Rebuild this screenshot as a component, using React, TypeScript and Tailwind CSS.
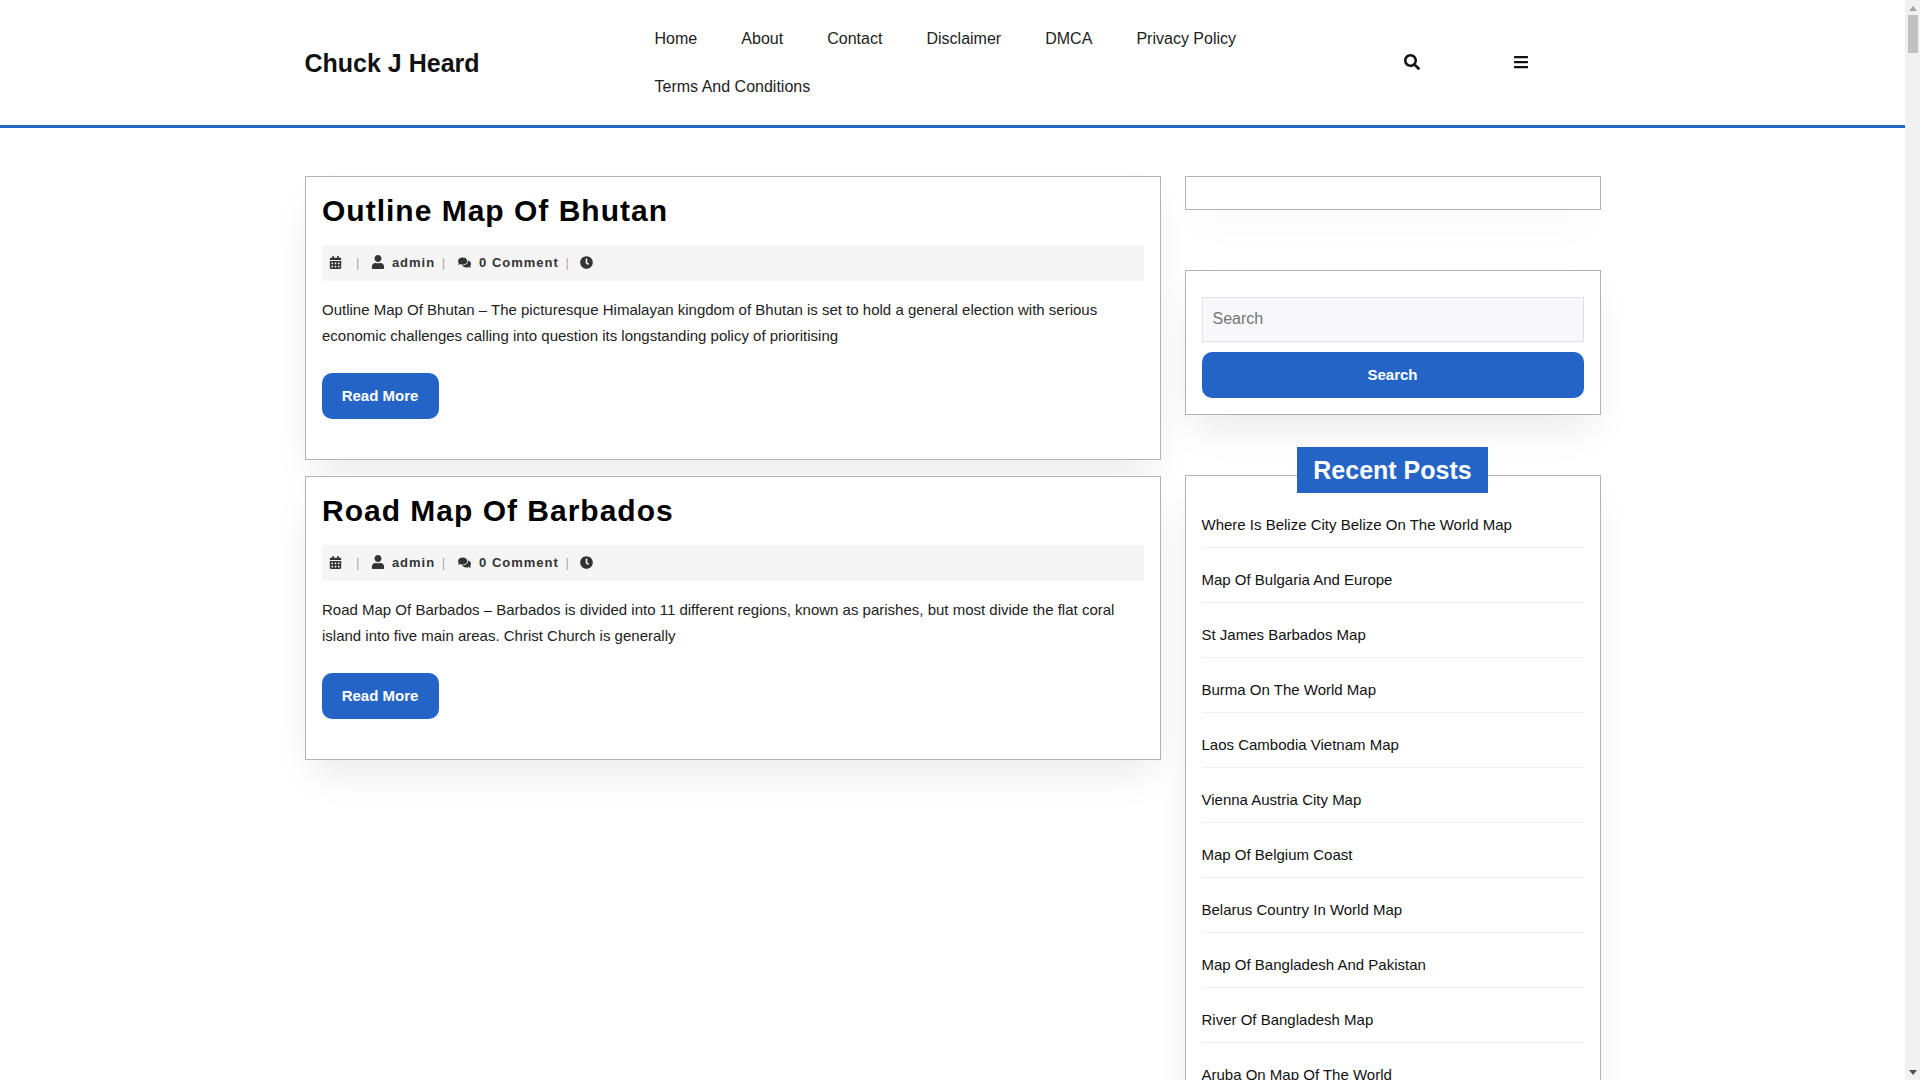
import { FaBars, FaCalendarAlt, FaClock, FaComments, FaSearch, FaUser } from "react-icons/fa";

const navItems = ["Home", "About", "Contact", "Disclaimer", "DMCA", "Privacy Policy", "Terms And Conditions"];

const posts = [
  {
    title: "Outline Map Of Bhutan",
    excerpt:
      "Outline Map Of Bhutan – The picturesque Himalayan kingdom of Bhutan is set to hold a general election with serious economic challenges calling into question its longstanding policy of prioritising",
  },
  {
    title: "Road Map Of Barbados",
    excerpt:
      "Road Map Of Barbados – Barbados is divided into 11 different regions, known as parishes, but most divide the flat coral island into five main areas. Christ Church is generally",
  },
];

const recentPosts = [
  "Where Is Belize City Belize On The World Map",
  "Map Of Bulgaria And Europe",
  "St James Barbados Map",
  "Burma On The World Map",
  "Laos Cambodia Vietnam Map",
  "Vienna Austria City Map",
  "Map Of Belgium Coast",
  "Belarus Country In World Map",
  "Map Of Bangladesh And Pakistan",
  "River Of Bangladesh Map",
  "Aruba On Map Of The World",
];

const Sep = () => <span className="mt-[1px] font-normal text-[#aaa]">|</span>;

const PostCard = ({ title, excerpt }: { title: string; excerpt: string }) => (
  <article className="mb-4 h-[284px] border border-[#b3b3b3] bg-white px-4 pt-[11px] shadow-[0_20px_40px_-10px_rgba(40,20,20,0.1)]">
    <h2 className="mb-3 ml-[0.5px] text-[30px] leading-[45px] font-bold tracking-[1px] text-black">{title}</h2>
    <div className="flex h-9 items-center bg-[#f5f5f5] pb-[2px] pl-[7px] text-[13px] font-bold tracking-[1px] text-[#333]">
      <FaCalendarAlt className="mr-[14.5px] text-[13px]" />
      <Sep />
      <FaUser className="mr-[7px] ml-[10.5px] text-[14px]" />
      <span className="mt-[1px] mr-[6.5px]">admin</span>
      <Sep />
      <FaComments className="mr-[8px] ml-[12px] text-[13px]" />
      <span className="mt-[1px] mr-[6.5px]">0 Comment</span>
      <Sep />
      <FaClock className="ml-[10.5px] text-[13px]" />
    </div>
    <p className="mt-4 ml-[0.5px] text-[15px] leading-[26px] text-[#222]">{excerpt}</p>
    <button className="mt-6 block h-[46px] w-[117px] rounded-[10px] bg-[#2364c6] text-[15px] font-bold text-white">
      Read More
    </button>
  </article>
);

export default function App() {
  return (
    <div className="flex h-[1080px] w-[1920px] overflow-hidden bg-white font-['Liberation_Sans',Arial,sans-serif]">
      <div className="w-[1905px] shrink-0">
        <header className="h-[128px] border-b-[3px] border-[#2364c6]">
          <div className="mx-auto flex h-[125px] w-[1296px] items-center">
            <h1 className="mt-[2px] w-[328px] text-[25px] font-bold text-[#111]">Chuck J Heard</h1>
            <nav className="flex w-[740px] flex-wrap">
              {navItems.map((item) => (
                <a key={item} className="px-[22.06px] py-3 text-[16px] leading-[24px] text-[#222]">
                  {item}
                </a>
              ))}
            </nav>
            <div className="mb-[1px] flex items-center text-[16px] text-[#111]">
              <FaSearch className="ml-[31px]" />
              <FaBars className="ml-[93px]" />
            </div>
          </div>
        </header>

        <main className="mx-auto mt-12 flex w-[1296px] gap-6">
          <div className="w-[856px] shrink-0">
            {posts.map((post) => (
              <PostCard key={post.title} {...post} />
            ))}
          </div>

          <aside className="w-[416px] shrink-0">
            <div className="h-[34px] border border-[#b3b3b3] bg-white shadow-[0_20px_40px_-10px_rgba(40,20,20,0.05)]" />

            <div className="mt-[60px] h-[145px] border border-[#b3b3b3] bg-white px-4 pt-[26px] shadow-[0_20px_40px_-10px_rgba(40,20,20,0.1)]">
              <input
                placeholder="Search"
                className="block h-[45px] w-full border border-[#e0e0e0] bg-[#f7f7fc] px-[10px] pb-[2px] text-[16px] placeholder:text-[#757575]"
              />
              <button className="mt-[10px] block h-[46px] w-full rounded-[10px] bg-[#2364c6] text-[15px] font-bold text-white">
                Search
              </button>
            </div>

            <div className="mt-[60px] border border-[#b3b3b3] bg-white px-4 pb-4 shadow-[0_20px_40px_-10px_rgba(40,20,20,0.1)]">
              <h3 className="mx-auto -mt-[29px] h-[46px] w-[191px] bg-[#2364c6] text-center text-[25px] leading-[46px] font-bold text-white">
                Recent Posts
              </h3>
              <ul className="mt-5">
                {recentPosts.map((item) => (
                  <li
                    key={item}
                    className="mb-5 h-[35px] border-b border-[#eee] text-[15px] leading-[24px] text-[#111]"
                  >
                    {item}
                  </li>
                ))}
              </ul>
            </div>
          </aside>
        </main>
      </div>

      <div className="flex w-[15px] shrink-0 flex-col items-center bg-[#f1f1f1]">
        <div className="mt-[6px] h-0 w-0 border-x-[4px] border-b-[5px] border-x-transparent border-b-[#a3a3a3]" />
        <div className="mt-[4px] h-[38px] w-[10px] bg-[#c1c1c1]" />
        <div className="mt-auto mb-[5px] h-0 w-0 border-x-[4px] border-t-[5px] border-x-transparent border-t-[#505050]" />
      </div>
    </div>
  );
}
